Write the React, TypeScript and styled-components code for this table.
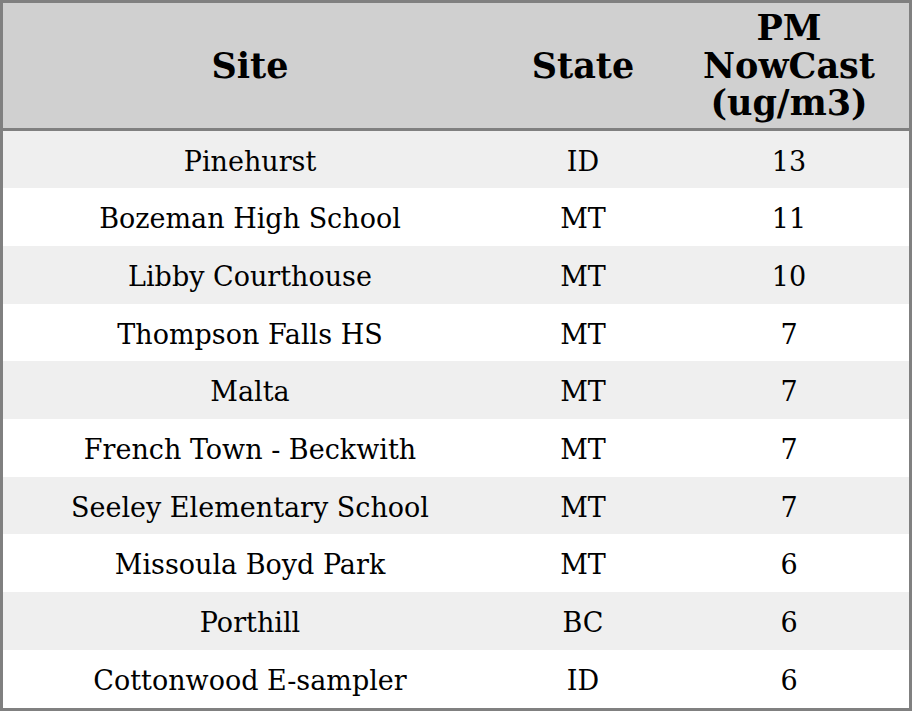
import React from "react";
import styled, { createGlobalStyle } from "styled-components";

const GlobalStyle = createGlobalStyle`
  html, body {
    margin: 0;
    padding: 0;
    background: #ffffff;
  }
`;

interface Reading {
  site: string;
  state: string;
  value: number;
}

const readings: ReadonlyArray<Reading> = [
  { site: "Pinehurst", state: "ID", value: 13 },
  { site: "Bozeman High School", state: "MT", value: 11 },
  { site: "Libby Courthouse", state: "MT", value: 10 },
  { site: "Thompson Falls HS", state: "MT", value: 7 },
  { site: "Malta", state: "MT", value: 7 },
  { site: "French Town - Beckwith", state: "MT", value: 7 },
  { site: "Seeley Elementary School", state: "MT", value: 7 },
  { site: "Missoula Boyd Park", state: "MT", value: 6 },
  { site: "Porthill", state: "BC", value: 6 },
  { site: "Cottonwood E-sampler", state: "ID", value: 6 },
];

const Table = styled.table`
  width: 912px;
  border-collapse: collapse;
  border: 3px solid #808080;
  font-family: "DejaVu Serif", serif;
  color: #000000;
`;

const HeadRow = styled.tr`
  background: #d0d0d0;
  border-bottom: 3px solid #808080;
`;

const HeadCell = styled.th<{ $width: number }>`
  width: ${(p) => p.$width}px;
  font-size: 35px;
  font-weight: bold;
  text-align: center;
  padding: 6px 0;
  line-height: 37.5px;
`;

const Row = styled.tr<{ $shaded: boolean }>`
  background: ${(p) => (p.$shaded ? "#efefef" : "#ffffff")};
`;

const Cell = styled.td`
  font-size: 27px;
  line-height: 31.7px;
  text-align: center;
  padding: 15px 0 11px;
`;

export default function App() {
  return (
    <>
      <GlobalStyle />
      <Table>
        <thead>
          <HeadRow>
            <HeadCell $width={494}>Site</HeadCell>
            <HeadCell $width={172}>State</HeadCell>
            <HeadCell $width={240}>
              PM
              <br />
              NowCast
              <br />
              (ug/m3)
            </HeadCell>
          </HeadRow>
        </thead>
        <tbody>
          {readings.map((r, i) => (
            <Row key={r.site} $shaded={i % 2 === 0}>
              <Cell>{r.site}</Cell>
              <Cell>{r.state}</Cell>
              <Cell>{r.value}</Cell>
            </Row>
          ))}
        </tbody>
      </Table>
    </>
  );
}
